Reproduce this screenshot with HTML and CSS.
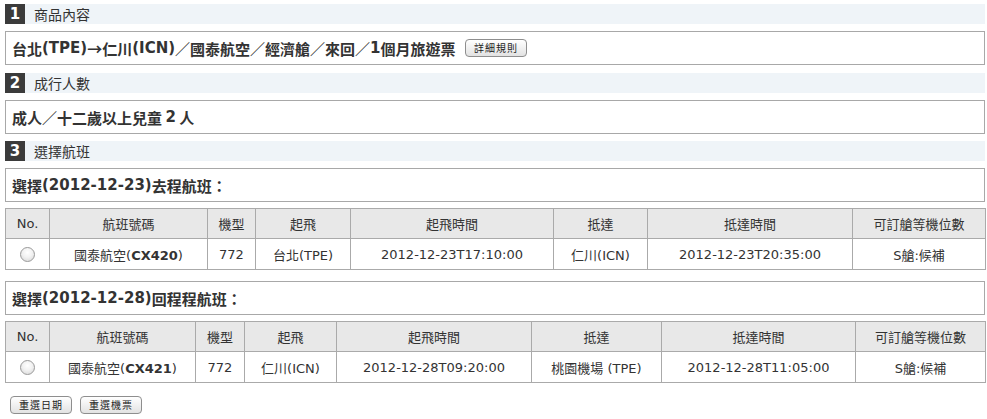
FILE: index.html
```html
<!DOCTYPE html>
<html lang="zh-Hant">
<head>
<meta charset="utf-8">
<title>訂票</title>
<link rel="stylesheet" href="styles.css">
</head>
<body>
<div class="page">
  <div class="sec-head"><span class="num">1</span><span class="sec-title">商品內容</span></div>
  <div class="box box-first">台北<b class="lat">(TPE)</b>→仁川<b class="lat">(ICN)</b>／國泰航空／經濟艙／來回／<b class="lat">1</b>個月旅遊票 <button class="btn btn-inline">詳細規則</button></div>

  <div class="sec-head"><span class="num">2</span><span class="sec-title">成行人數</span></div>
  <div class="box">成人／十二歲以上兒童 <b class="lat">2</b> 人</div>

  <div class="sec-head"><span class="num">3</span><span class="sec-title">選擇航班</span></div>
  <div class="box box-tight">選擇<b class="lat">(2012-12-23)</b>去程航班：</div>

  <table class="flights t1">
    <colgroup>
      <col class="c1"><col class="c2"><col class="c3"><col class="c4"><col class="c5"><col class="c6"><col class="c7"><col class="c8">
    </colgroup>
    <thead>
      <tr><th>No.</th><th>航班號碼</th><th>機型</th><th>起飛</th><th>起飛時間</th><th>抵達</th><th>抵達時間</th><th>可訂艙等機位數</th></tr>
    </thead>
    <tbody>
      <tr><td><span class="radio"></span></td><td>國泰航空(<b>CX420</b>)</td><td>772</td><td>台北(TPE)</td><td>2012-12-23T17:10:00</td><td>仁川(ICN)</td><td>2012-12-23T20:35:00</td><td>S艙:候補</td></tr>
    </tbody>
  </table>

  <div class="box box-tight box-after-table">選擇<b class="lat">(2012-12-28)</b>回程程航班：</div>

  <table class="flights t2">
    <colgroup>
      <col class="c1"><col class="c2"><col class="c3"><col class="c4"><col class="c5"><col class="c6"><col class="c7"><col class="c8">
    </colgroup>
    <thead>
      <tr><th>No.</th><th>航班號碼</th><th>機型</th><th>起飛</th><th>起飛時間</th><th>抵達</th><th>抵達時間</th><th>可訂艙等機位數</th></tr>
    </thead>
    <tbody>
      <tr><td><span class="radio"></span></td><td>國泰航空(<b>CX421</b>)</td><td>772</td><td>仁川(ICN)</td><td>2012-12-28T09:20:00</td><td>桃園機場 (TPE)</td><td>2012-12-28T11:05:00</td><td>S艙:候補</td></tr>
    </tbody>
  </table>

  <div class="actions">
    <button class="btn">重選日期</button>
    <button class="btn">重選機票</button>
  </div>
</div>
</body>
</html>
```

FILE: styles.css
```css
html, body {
  margin: 0;
  padding: 0;
  background: #fff;
}
body {
  font-family: "DejaVu Sans", "Noto Sans CJK TC", sans-serif;
  color: #333;
}
.page {
  width: 980px;
  margin-left: 5px;
  padding-top: 4px;
}
.sec-head {
  display: flex;
  align-items: center;
  height: 20px;
  background: #eff4f8;
  margin-bottom: 7px;
}
.num {
  width: 20px;
  height: 20px;
  background: #3b3b3b;
  color: #fff;
  font-weight: bold;
  font-size: 15px;
  line-height: 20px;
  text-align: center;
}
.sec-title {
  margin-left: 9px;
  font-size: 14px;
  font-family: "Noto Sans CJK TC", sans-serif;
  color: #333;
}
.box {
  box-sizing: border-box;
  height: 34px;
  border: 1px solid #a8a8a8;
  padding: 0 6px;
  display: flex;
  align-items: center;
  font-size: 15px;
  font-weight: bold;
  font-family: "Noto Sans CJK TC", sans-serif;
  margin-bottom: 7px;
  white-space: pre;
}
.box-first {
  margin-bottom: 8px;
}
.lat {
  font-family: "DejaVu Sans", sans-serif;
  font-weight: bold;
}
.box-tight {
  margin-bottom: 6px;
}
.btn {
  font-family: "Noto Sans CJK TC", sans-serif;
  font-size: 10px;
  height: 18px;
  padding: 0 8px;
  border: 1px solid #8e8e8e;
  border-radius: 4px;
  background: linear-gradient(#ffffff, #e2e2e2);
  color: #222;
  line-height: 16px;
  font-weight: normal;
  letter-spacing: 1px;
}
.btn-inline {
  margin-left: 6px;
}
.flights {
  width: 980px;
  border-collapse: collapse;
  table-layout: fixed;
  font-size: 13px;
  color: #333;
}
.flights th, .flights td {
  border: 1px solid #aaa;
  text-align: center;
  padding: 0;
}
.flights th {
  background: #e8e8e8;
  font-weight: normal;
  height: 29px;
  font-family: "Noto Sans CJK TC", sans-serif;
}
.flights th:first-child {
  font-family: "DejaVu Sans", sans-serif;
}
.flights td {
  height: 30px;
  font-family: "DejaVu Sans", "Noto Sans CJK TC", sans-serif;
}
.flights td b {
  font-weight: bold;
}
.t1 .c1 { width: 44px; }
.t1 .c2 { width: 158px; }
.t1 .c3 { width: 48px; }
.t1 .c4 { width: 95px; }
.t1 .c5 { width: 203px; }
.t1 .c6 { width: 94px; }
.t1 .c7 { width: 205px; }
.t1 .c8 { width: 133px; }
.t2 .c1 { width: 44px; }
.t2 .c2 { width: 146px; }
.t2 .c3 { width: 49px; }
.t2 .c4 { width: 92px; }
.t2 .c5 { width: 195px; }
.t2 .c6 { width: 130px; }
.t2 .c7 { width: 194px; }
.t2 .c8 { width: 130px; }
.box-after-table {
  margin-top: 11px;
}
.radio {
  display: inline-block;
  width: 13px;
  height: 13px;
  border-radius: 50%;
  border: 1px solid #9a9a9a;
  background: radial-gradient(circle at 50% 35%, #ffffff 0%, #f2f2f2 45%, #d4d4d4 100%);
  vertical-align: middle;
}
.actions {
  display: flex;
  gap: 8px;
  margin-top: 13px;
  padding-left: 5px;
}
```
